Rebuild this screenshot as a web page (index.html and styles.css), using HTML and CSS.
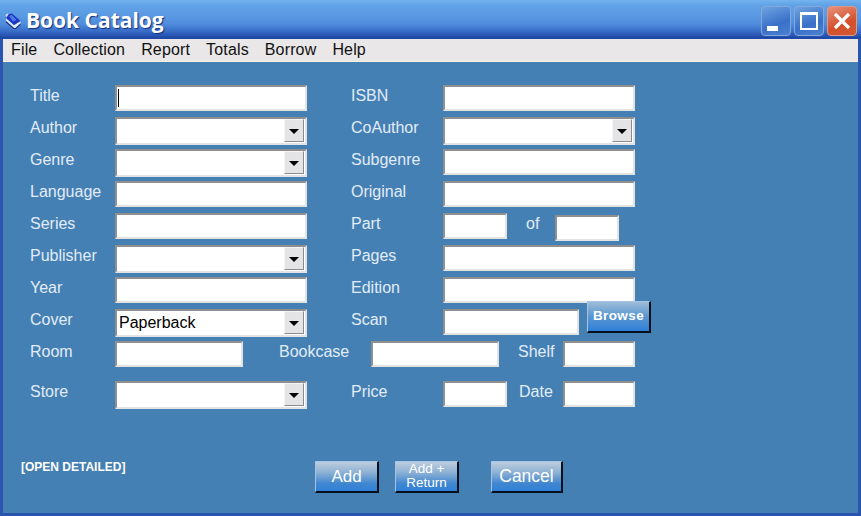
FILE: index.html
```html
<!DOCTYPE html>
<html lang="en">
<head>
<meta charset="utf-8">
<title>Book Catalog</title>
<link rel="stylesheet" href="styles.css">
</head>
<body>
<div class="window">
  <header class="titlebar">
    <svg class="app-icon" width="16" height="16" viewBox="0 0 16 16" aria-hidden="true">
      <path d="M1 5 L1 8 L9 15 L10.5 15 L15.5 10.5 L15.5 8 L9 12 Z" fill="#dfe8f8"/>
      <path d="M9 15 L1 8 L1 9.5 L8.5 16 L11 16 L15.5 12 L15.5 10.5 L10.5 15 Z" fill="#16307c"/>
      <path d="M1 5 L2.5 1.5 L7 0.5 L15.5 8 L9 12 Z" fill="#1c38c4"/>
      <path d="M4 3 L7 2 L11.5 7 L8 8.5 Z" fill="#5278e8"/>
      <path d="M0.5 2 L2.5 0.5 L3.5 1.5 L1.5 4.5 Z" fill="#cfdcf2"/>
    </svg>
    <h1 class="app-title">Book Catalog</h1>
    <div class="controls">
      <div class="ctl ctl-min"><span class="min-glyph"></span></div>
      <div class="ctl ctl-max"><span class="max-glyph"></span></div>
      <div class="ctl ctl-close">
        <svg width="20" height="20" viewBox="0 0 20 20" aria-hidden="true"><path d="M3 3 L17 17 M17 3 L3 17" stroke="#fff" stroke-width="3.2"/></svg>
      </div>
    </div>
  </header>
  <nav class="menubar">
    <span>File</span><span>Collection</span><span>Report</span><span>Totals</span><span>Borrow</span><span>Help</span>
  </nav>
  <main class="body">
    <form class="form">
      <div class="row">
        <label class="lbl">Title</label>
        <div class="field wide caret-wrap"><input class="inp" type="text"><i class="caret"></i></div>
        <label class="lbl lbl2">ISBN</label>
        <input class="inp wide" type="text">
      </div>
      <div class="row">
        <label class="lbl">Author</label>
        <div class="combo wide"><input class="inp" type="text"><span class="arrow"></span></div>
        <label class="lbl lbl2">CoAuthor</label>
        <div class="combo wide"><input class="inp" type="text"><span class="arrow"></span></div>
      </div>
      <div class="row">
        <label class="lbl">Genre</label>
        <div class="combo wide"><input class="inp" type="text"><span class="arrow"></span></div>
        <label class="lbl lbl2">Subgenre</label>
        <input class="inp wide" type="text">
      </div>
      <div class="row">
        <label class="lbl">Language</label>
        <input class="inp wide" type="text">
        <label class="lbl lbl2">Original</label>
        <input class="inp wide" type="text">
      </div>
      <div class="row">
        <label class="lbl">Series</label>
        <input class="inp wide" type="text">
        <label class="lbl lbl2">Part</label>
        <input class="inp small" type="text">
        <label class="lbl of">of</label>
        <input class="inp small drop2" type="text">
      </div>
      <div class="row">
        <label class="lbl">Publisher</label>
        <div class="combo wide"><input class="inp" type="text"><span class="arrow"></span></div>
        <label class="lbl lbl2">Pages</label>
        <input class="inp wide" type="text">
      </div>
      <div class="row">
        <label class="lbl">Year</label>
        <input class="inp wide" type="text">
        <label class="lbl lbl2">Edition</label>
        <input class="inp wide" type="text">
      </div>
      <div class="row">
        <label class="lbl">Cover</label>
        <div class="combo wide"><input class="inp" type="text" value="Paperback"><span class="arrow"></span></div>
        <label class="lbl lbl2">Scan</label>
        <input class="inp scan" type="text">
        <button class="btn browse" type="button">Browse</button>
      </div>
      <div class="row">
        <label class="lbl">Room</label>
        <input class="inp mid" type="text">
        <label class="lbl bookcase">Bookcase</label>
        <input class="inp mid" type="text">
        <label class="lbl shelf">Shelf</label>
        <input class="inp tiny" type="text">
      </div>
      <div class="row store">
        <label class="lbl">Store</label>
        <div class="combo wide"><input class="inp" type="text"><span class="arrow"></span></div>
        <label class="lbl lbl2">Price</label>
        <input class="inp small" type="text">
        <label class="lbl date">Date</label>
        <input class="inp tiny" type="text">
      </div>
    </form>
    <footer class="footer">
      <span class="detailed">[OPEN DETAILED]</span>
      <button class="btn add" type="button">Add</button>
      <button class="btn addret" type="button"><span class="line">Add +</span><span class="line">Return</span></button>
      <button class="btn cancel" type="button">Cancel</button>
    </footer>
  </main>
</div>
</body>
</html>
```

FILE: styles.css
```css
* { box-sizing: border-box; }
html, body { margin: 0; padding: 0; }
body { width: 861px; height: 516px; overflow: hidden; font-family: "Liberation Sans", Arial, sans-serif; }

.window {
  width: 861px;
  height: 516px;
  display: flex;
  flex-direction: column;
  background: #2a55ae;
}

.titlebar {
  height: 39px;
  flex: none;
  display: flex;
  align-items: center;
  padding: 0 4px 0 5px;
  background: linear-gradient(180deg, #74b3ee 0, #62a3e6 5px, #5a99e2 16px, #4f8cdc 24px, #3a6ec8 31px, #1f47a6 38px);
}
.app-icon { flex: none; margin-right: 5px; margin-top: 3px; }
.app-title {
  margin: 0;
  font: bold 21px "Open Sans", "DejaVu Sans", sans-serif;
  color: #fff;
  text-shadow: 1px 1px 1px #10307f;
}
.controls { margin-left: auto; display: flex; gap: 3px; margin-top: 2px; }
.ctl {
  width: 30px;
  height: 30px;
  border: 1px solid #86a9dc;
  border-radius: 4px;
  background: linear-gradient(160deg, #6ea3e0, #3a70c8 60%, #4a82d2);
  display: flex;
  align-items: center;
  justify-content: center;
}
.ctl-close { background: linear-gradient(160deg, #e8907c, #d4502a 60%, #cf5a35); border-color: #e09a88; }
.min-glyph { width: 11px; height: 5px; background: #fff; margin-top: 15px; margin-right: 7px; }
.max-glyph { width: 18px; height: 18px; border: 2px solid #fff; border-top-width: 3px; }

.menubar {
  height: 23px;
  flex: none;
  margin: 0 3px;
  padding: 0 0 0 8px;
  display: flex;
  gap: 16px;
  letter-spacing: 0.15px;
  align-items: center;
  background: #e9e7e8;
  border-bottom: 1px solid #f6f3e6;
  font-size: 16px;
  color: #111;
}

.body {
  flex: 1;
  margin: 0 3px 3px;
  background: #4480b4;
  display: flex;
  flex-direction: column;
  padding: 23px 0 0 27px;
  min-height: 0;
}

.form { display: flex; flex-direction: column; gap: 6px; }
.row { display: flex; align-items: flex-start; height: 26px; }
.row.store { margin-top: 8px; }

.lbl { color: #e2ecf6; font-size: 16px; line-height: 20px; margin-top: 1px; flex: none; }
.row > .lbl:first-child { width: 85px; }
.lbl2 { margin-left: 44px; width: 92px; }
.of { margin-left: 19px; width: 29px; }
.bookcase { margin-left: 36px; width: 92px; }
.shelf { margin-left: 19px; width: 45px; }
.date { margin-left: 12px; width: 44px; }

.inp {
  display: block;
  height: 26px;
  padding: 0 2px;
  margin: 0;
  border: 2px solid;
  border-color: #8f8f8f #e3e3e3 #e3e3e3 #8f8f8f;
  border-radius: 0;
  background: #fff;
  font: 16px "Liberation Sans", Arial, sans-serif;
  color: #000;
  outline: none;
  flex: none;
}
.wide { width: 192px; flex: none; }
.mid { width: 128px; }
.small { width: 64px; }
.tiny { width: 72px; }
.scan { width: 136px; }
.drop2 { margin-top: 2px; }
.field .inp, .combo .inp { width: 100%; }
.combo .inp { height: 28px; }

.caret-wrap { position: relative; }
.caret { position: absolute; left: 3px; top: 4px; width: 1px; height: 18px; background: #000; }

.combo { position: relative; }
.arrow {
  position: absolute;
  right: 3px;
  top: 2px;
  width: 20px;
  height: 23px;
  background: #e4e3e6;
  border: 1px solid;
  border-color: #f4f4f4 #8c8c8c #8c8c8c #f4f4f4;
}
.arrow::after {
  content: "";
  position: absolute;
  left: 4px;
  top: 9px;
  border-style: solid;
  border-width: 5px 5px 0;
  border-color: #000 transparent transparent;
}

.btn {
  margin: 0;
  padding: 0;
  height: 32px;
  border: 1px solid;
  border-width: 1px 2px 2px 1px;
  border-color: #a4c4e6 #06101c #06101c #a4c4e6;
  background: linear-gradient(180deg, #bccddd 0, #8fb2d4 35%, #3f86d0 75%, #2f80d8 100%);
  color: #fff;
  font-family: "Liberation Sans", Arial, sans-serif;
  flex: none;
}
.browse {
  width: 64px;
  margin-left: 8px;
  margin-top: -8px;
  font-size: 13.5px;
  font-weight: bold;
  letter-spacing: 0.4px;
  padding-bottom: 2px;
  background: linear-gradient(180deg, #9dbcd8 0, #5a96cf 50%, #2f80d8 100%);
}

.footer { display: flex; align-items: flex-start; margin-top: 54px; }
.detailed { width: 294px; margin-left: -9px; font-size: 12px; font-weight: bold; color: #fff; line-height: 13px; }
.add { width: 64px; font-size: 17px; }
.addret { width: 64px; margin-left: 16px; font-size: 13.5px; display: flex; flex-direction: column; align-items: center; justify-content: flex-start; }
.addret .line { display: block; line-height: 14px; height: 14px; }
.cancel { width: 72px; margin-left: 32px; font-size: 17.5px; }
```
